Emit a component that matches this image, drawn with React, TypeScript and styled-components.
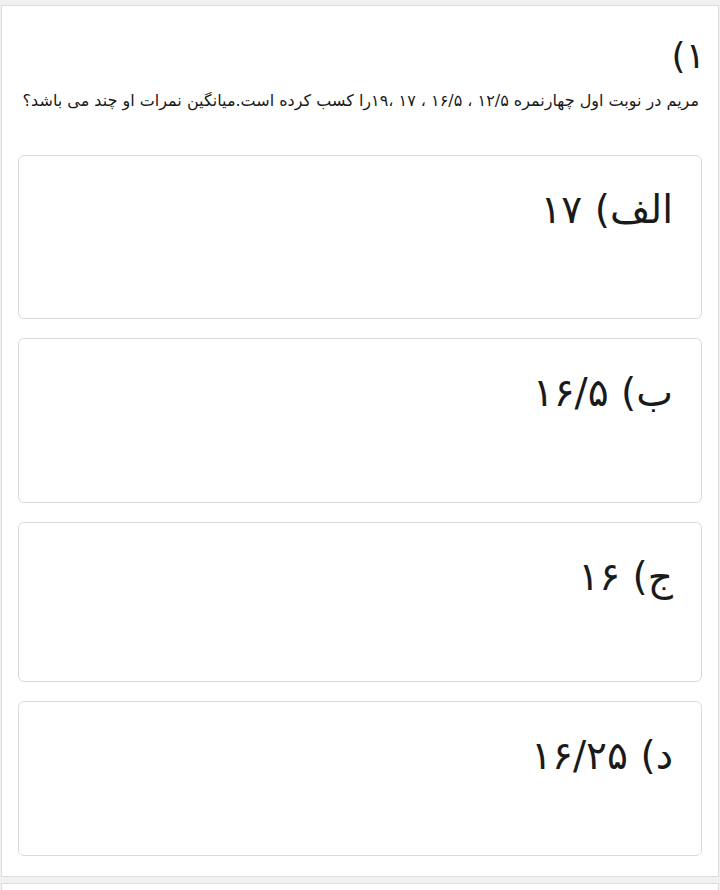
import React from "react";
import styled, { createGlobalStyle } from "styled-components";

const GlobalStyle = createGlobalStyle`
  html, body {
    margin: 0;
    padding: 0;
    background: #f1f1f1;
  }
  body {
    font-family: "DejaVu Sans", "Noto Sans", sans-serif;
  }
`;

const Page = styled.div`
  width: 720px;
  height: 890px;
  overflow: hidden;
  padding-top: 5px;
  box-sizing: border-box;
`;

const Card = styled.section`
  margin-left: 1px;
  width: 718px;
  height: 872px;
  box-sizing: border-box;
  background: #ffffff;
  border: 1px solid #dedede;
  direction: rtl;
  padding: 0 16px 0 16px;
  display: flex;
  flex-direction: column;
`;

const NextCard = styled.div`
  margin-top: 6px;
  margin-left: 1px;
  width: 718px;
  height: 40px;
  box-sizing: border-box;
  background: #ffffff;
  border: 1px solid #dedede;
`;

const Title = styled.h2`
  margin: 27px -3px 0 0;
  font-family: "DejaVu Sans", sans-serif;
  font-size: 36px;
  font-weight: 400;
  line-height: 46px;
  color: #1a1a1a;
  text-align: right;
`;

const Question = styled.p`
  margin: 11px 3px 0 0;
  font-family: "DejaVu Sans", sans-serif;
  font-size: 16px;
  line-height: 22px;
  color: #1a1a1a;
  text-align: right;
  white-space: nowrap;
`;

const Options = styled.div`
  margin-top: 43px;
  display: flex;
  flex-direction: column;
  gap: 18px;
`;

const OptionBox = styled.div<{ $h: number }>`
  height: ${(p) => p.$h}px;
  box-sizing: border-box;
  border: 1px solid #dadada;
  border-radius: 6px;
  background: #fff;
  padding: 28px 28px 0 0;
  margin-bottom: 1px;
`;

const OptionText = styled.div`
  font-family: "DejaVu Sans", sans-serif;
  font-size: 39px;
  line-height: 52px;
  color: #1a1a1a;
  text-align: right;
`;

const options = [
  { text: "الف) ۱۷", h: 164 },
  { text: "ب) ۱۶/۵", h: 165 },
  { text: "ج) ۱۶", h: 160 },
  { text: "د) ۱۶/۲۵", h: 155 },
];

export default function App() {
  return (
    <Page>
      <GlobalStyle />
      <Card>
        <Title>۱)</Title>
        <Question>
          مریم در نوبت اول چهارنمره ۱۲/۵ ، ۱۶/۵ ، ۱۷ ،۱۹را کسب کرده است.میانگین نمرات او چند می باشد؟
        </Question>
        <Options>
          {options.map((o) => (
            <OptionBox key={o.text} $h={o.h}>
              <OptionText>{o.text}</OptionText>
            </OptionBox>
          ))}
        </Options>
      </Card>
      <NextCard />
    </Page>
  );
}
